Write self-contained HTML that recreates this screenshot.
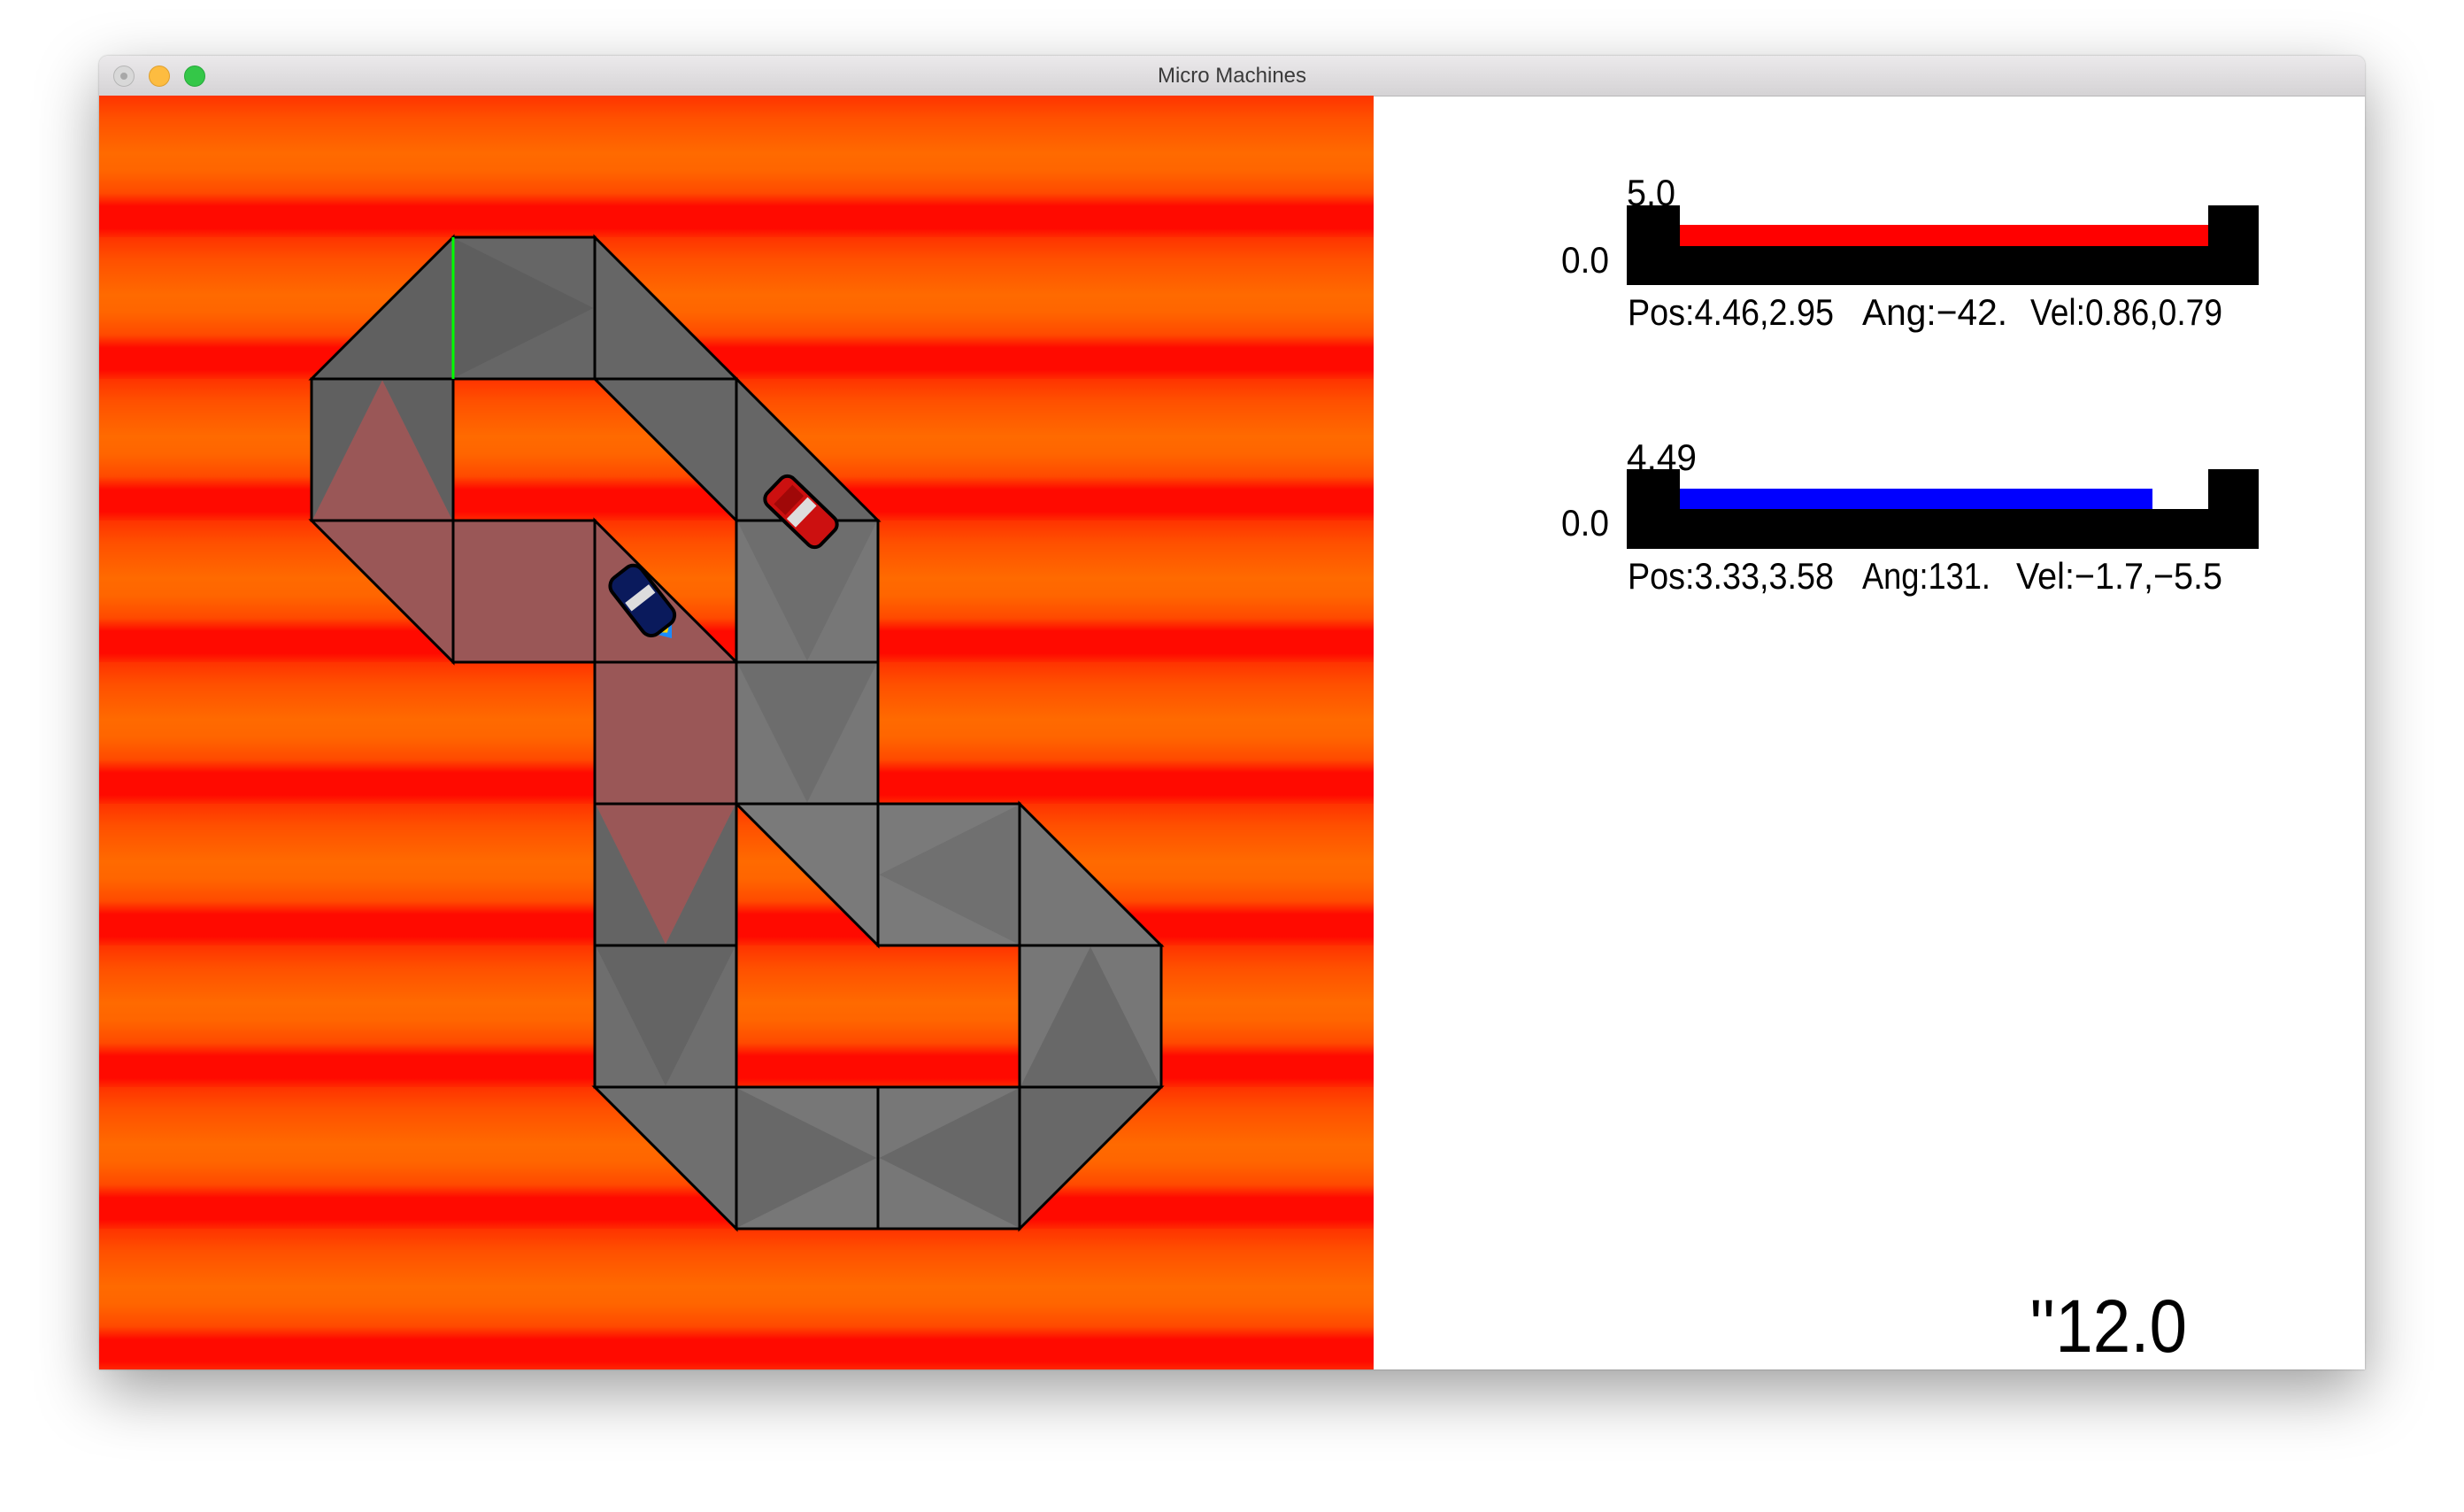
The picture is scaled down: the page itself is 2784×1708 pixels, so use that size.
<!DOCTYPE html>
<html><head><meta charset="utf-8"><style>
html,body{margin:0;padding:0;background:#fff;width:2784px;height:1708px;overflow:hidden}
.win{position:absolute;left:112px;top:63px;width:2560px;height:1484px;border-radius:10px 10px 0 0;box-shadow:0 25px 70px rgba(0,0,0,0.38),0 0 2px rgba(0,0,0,0.3);background:#fff;overflow:hidden}
.tb{position:absolute;left:0;top:0;width:2560px;height:45px;background:linear-gradient(#ebe9eb,#d5d3d5);border-bottom:1px solid #b8b8b8;font-family:"Liberation Sans",sans-serif;font-size:24px;color:#3a3a3a;text-align:center;line-height:46px}
.l{position:absolute;top:11px;width:22px;height:22px;border-radius:50%}
.game{position:absolute;left:0;top:45px;width:1440px;height:1439px;background:repeating-linear-gradient(180deg,#ff3300 0px,#ff5000 25px,#ff6a00 65px,#ff6500 85px,#ff4a00 110px,#ff0a00 125px,#ff0a00 150px,#ff2a00 160px)}
</style></head><body>
<div class="win">
 <div class="tb">Micro Machines
  <div class="l" style="left:16px;background:#d8d8d8;border:1px solid #b5b5b5"><div style="position:absolute;left:7px;top:7px;width:8px;height:8px;border-radius:50%;background:#a8a8a8"></div></div>
  <div class="l" style="left:56px;background:#fdbc40;border:1px solid #de9f2e"></div>
  <div class="l" style="left:96px;background:#34c748;border:1px solid #27a83a"></div>
 </div>
 <div class="game">
 <svg width="1440" height="1439" viewBox="0 0 1440 1439" xmlns="http://www.w3.org/2000/svg">
  <g stroke="#000" stroke-width="3" stroke-linejoin="miter">
   <polygon points="400,160 400,320 240,320" fill="#606060"/>
   <rect x="400" y="160" width="160" height="160" fill="#666"/>
   <polygon points="560,160 720,320 560,320" fill="#666"/>
   <rect x="240" y="320" width="160" height="160" fill="#606060"/>
   <polygon points="560,320 720,320 720,480" fill="#666"/>
   <polygon points="720,320 720,480 880,480" fill="#666"/>
   <polygon points="240,480 400,480 400,640" fill="#9a5757"/>
   <rect x="400" y="480" width="160" height="160" fill="#9a5757"/>
   <polygon points="560,480 560,640 720,640" fill="#9a5757"/>
   <rect x="720" y="480" width="160" height="160" fill="#777"/>
   <rect x="560" y="640" width="160" height="160" fill="#9a5757"/>
   <rect x="720" y="640" width="160" height="160" fill="#777"/>
   <rect x="560" y="800" width="160" height="160" fill="#646464"/>
   <polygon points="720,800 880,800 880,960" fill="#7a7a7a"/>
   <rect x="880" y="800" width="160" height="160" fill="#7a7a7a"/>
   <polygon points="1040,800 1040,960 1200,960" fill="#777"/>
   <rect x="560" y="960" width="160" height="160" fill="#6e6e6e"/>
   <rect x="1040" y="960" width="160" height="160" fill="#777"/>
   <polygon points="560,1120 720,1120 720,1280" fill="#6f6f6f"/>
   <rect x="720" y="1120" width="160" height="160" fill="#777"/>
   <rect x="880" y="1120" width="160" height="160" fill="#777"/>
   <polygon points="1040,1120 1200,1120 1040,1280" fill="#686868"/>
  </g>
  <polygon points="401.5,161.5 558.5,240 401.5,318.5" fill="#5e5e5e"/>
  <polygon points="320,321.5 241.5,478.5 398.5,478.5" fill="#9a5757"/>
  <polygon points="721.5,481.5 878.5,481.5 800,638.5" fill="#6e6e6e"/>
  <polygon points="721.5,641.5 878.5,641.5 800,798.5" fill="#6d6d6d"/>
  <polygon points="561.5,801.5 718.5,801.5 640,958.5" fill="#9a5757"/>
  <polygon points="1038.5,801.5 1038.5,958.5 881.5,880" fill="#707070"/>
  <polygon points="561.5,961.5 718.5,961.5 640,1118.5" fill="#646464"/>
  <polygon points="1120,961.5 1041.5,1118.5 1198.5,1118.5" fill="#686868"/>
  <polygon points="721.5,1121.5 878.5,1200 721.5,1278.5" fill="#686868"/>
  <polygon points="1038.5,1121.5 881.5,1200 1038.5,1278.5" fill="#686868"/>
  <line x1="400" y1="160" x2="400" y2="320" stroke="#00ff00" stroke-width="3"/>
  <g transform="translate(793,470) rotate(44)">
   <rect x="-42" y="-21" width="84" height="42" rx="10" fill="#cc1010" stroke="#000" stroke-width="4"/>
   <rect x="-6" y="-17" width="14" height="34" fill="#ddd"/>
   <rect x="-28" y="-15" width="18" height="30" fill="#a00808"/>
  </g>
  <g transform="translate(615,572) rotate(52)">
   <polygon points="34,-14 52,0 34,14" fill="#1a8cff"/>
   <polygon points="34,-12 44,0 34,12" fill="#ffd400"/>
   <rect x="-42" y="-21" width="80" height="42" rx="12" fill="#0a1a5c" stroke="#000" stroke-width="4"/>
   <rect x="-12" y="-17" width="12" height="34" fill="#ddd"/>
  </g>
 </svg>
 </div>
</div>
<svg style="position:absolute;left:0;top:0" width="2784" height="1708" xmlns="http://www.w3.org/2000/svg" font-family="Liberation Sans, sans-serif" fill="#000">
 <path d="M1838,232 H1898 V254 H2495 V232 H2552 V322 H1838 Z"/>
 <rect x="1898" y="254" width="597" height="24" fill="#ff0000"/>
 <text x="1838" y="232" font-size="42" textLength="55" lengthAdjust="spacingAndGlyphs">5.0</text>
 <text x="1764" y="308" font-size="42" textLength="54" lengthAdjust="spacingAndGlyphs">0.0</text>
 <text x="1839" y="367" font-size="42" textLength="233" lengthAdjust="spacingAndGlyphs">Pos:4.46,2.95</text>
 <text x="2104" y="367" font-size="42" textLength="164" lengthAdjust="spacingAndGlyphs">Ang:−42.</text>
 <text x="2294" y="367" font-size="42" textLength="217" lengthAdjust="spacingAndGlyphs">Vel:0.86,0.79</text>

 <path d="M1838,530 H1898 V552 H2495 V530 H2552 V620 H1838 Z"/>
 <rect x="2432" y="552" width="63" height="23" fill="#fff"/>
 <rect x="1898" y="552" width="534" height="23" fill="#0000ff"/>
 <text x="1838" y="531" font-size="42" textLength="79" lengthAdjust="spacingAndGlyphs">4.49</text>
 <text x="1764" y="605" font-size="42" textLength="54" lengthAdjust="spacingAndGlyphs">0.0</text>
 <text x="1839" y="665" font-size="42" textLength="233" lengthAdjust="spacingAndGlyphs">Pos:3.33,3.58</text>
 <text x="2104" y="665" font-size="42" textLength="145" lengthAdjust="spacingAndGlyphs">Ang:131.</text>
 <text x="2278" y="665" font-size="42" textLength="233" lengthAdjust="spacingAndGlyphs">Vel:−1.7,−5.5</text>

 <text x="2293" y="1527" font-size="84" textLength="178" lengthAdjust="spacingAndGlyphs">''12.0</text>
</svg>
</body></html>
